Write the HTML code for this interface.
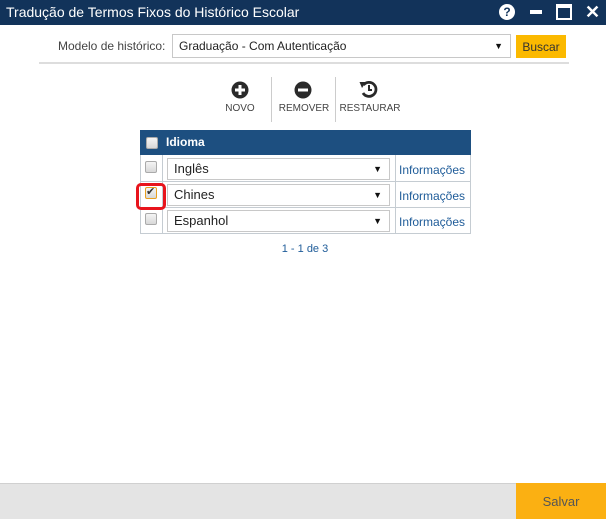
<!DOCTYPE html>
<html><head><meta charset="utf-8"><style>
*{margin:0;padding:0;box-sizing:border-box}
body{width:606px;height:519px;background:#fff;font-family:"Liberation Sans",sans-serif;position:relative;overflow:hidden;color:#333}
.abs{position:absolute}
.title{left:0;top:0;width:606px;height:25px;background:#12335a;color:#fff;font-size:14px;line-height:25px;padding-left:6px}
.sel{border:1px solid #c8c8c8;background:#fff;font-size:12px;color:#222;padding-left:6px}
.arr{position:absolute;right:7px;font-size:9px;color:#111}
.lbl{font-size:10px;color:#444;text-align:center}
.cb{position:absolute;width:12px;height:12px;border:1px solid #aaa;border-radius:2px;background:linear-gradient(#f4f4f4,#d8d8d8)}
.link{font-size:12px;color:#1f5c99}
</style></head><body>
<div class="abs title">Tradução de Termos Fixos do Histórico Escolar</div>
<div class="abs" style="left:499px;top:4px;width:16px;height:16px;border-radius:50%;background:#fff;color:#12335a;font-weight:bold;font-size:12px;text-align:center;line-height:16px">?</div>
<div class="abs" style="left:530px;top:10px;width:12px;height:4px;background:#fff"></div>
<div class="abs" style="left:556px;top:4px;width:16px;height:16px;border:2px solid #fff;border-top-width:4px"></div>
<div class="abs" style="left:585px;top:1px;color:#fff;font-size:18px;font-weight:bold;line-height:22px">✕</div>

<div class="abs" style="left:58px;top:39px;font-size:12px;color:#444">Modelo de histórico:</div>
<div class="abs sel" style="left:172px;top:34px;width:339px;height:24px;line-height:22px">Graduação - Com Autenticação<span class="arr">▼</span></div>
<div class="abs" style="left:516px;top:35px;width:50px;height:23px;background:#fbb900;font-size:12px;color:#333;text-align:center;line-height:25px">Buscar</div>
<div class="abs" style="left:39px;top:62px;width:530px;height:2px;background:#ddd"></div>

<svg class="abs" style="left:230px;top:80px" width="20" height="20" viewBox="0 0 20 20"><circle cx="10" cy="10" r="8.5" fill="#2a2a2a"/><rect x="5" y="8.5" width="10" height="3" fill="#fff"/><rect x="8.5" y="5" width="3" height="10" fill="#fff"/></svg>
<svg class="abs" style="left:293px;top:80px" width="20" height="20" viewBox="0 0 20 20"><circle cx="10" cy="10" r="8.5" fill="#2a2a2a"/><rect x="5" y="8.5" width="10" height="3" fill="#fff"/></svg>
<svg class="abs" style="left:358px;top:79px" width="22" height="20" viewBox="0 0 22 20"><path d="M5.5 6 A7 7 0 1 1 5 14" fill="none" stroke="#2a2a2a" stroke-width="2.8"/><path d="M1.5 3 L8 3 L4 9 Z" fill="#2a2a2a"/><path d="M11 6 V11 H14" fill="none" stroke="#2a2a2a" stroke-width="2"/></svg>
<div class="abs lbl" style="left:220px;top:103px;width:40px">NOVO</div>
<div class="abs lbl" style="left:276px;top:103px;width:56px">REMOVER</div>
<div class="abs lbl" style="left:339px;top:103px;width:62px">RESTAURAR</div>
<div class="abs" style="left:271px;top:77px;width:1px;height:45px;background:#ccc"></div>
<div class="abs" style="left:335px;top:77px;width:1px;height:45px;background:#ccc"></div>

<div class="abs" style="left:140px;top:130px;width:331px;height:25px;background:#1d4f80"></div>
<div class="cb" style="left:146px;top:137px"></div>
<div class="abs" style="left:166px;top:130px;line-height:25px;color:#fff;font-size:12px;font-weight:bold">Idioma</div>
<div class="abs" style="left:140px;top:155px;width:331px;height:79px;border:1px solid #c5ccd2;border-top:none"></div>
<div class="abs" style="left:141px;top:181px;width:329px;height:1px;background:#c5ccd2"></div>
<div class="abs" style="left:141px;top:207px;width:329px;height:1px;background:#c5ccd2"></div>
<div class="abs" style="left:162px;top:155px;width:1px;height:78px;background:#c5ccd2"></div>
<div class="abs" style="left:395px;top:155px;width:1px;height:78px;background:#c5ccd2"></div>

<div class="cb" style="left:145px;top:161px"></div>
<div class="abs sel" style="left:167px;top:158px;width:223px;height:22px;line-height:20px;font-size:13px">Inglês<span class="arr">▼</span></div>
<div class="abs link" style="left:399px;top:163px">Informações</div>

<div class="abs" style="left:136px;top:183px;width:30px;height:27px;border:3px solid #e8141c;border-radius:5px"></div>
<div class="cb" style="left:145px;top:187px;border-color:#e8a020"><span style="position:absolute;left:0;top:-3px;font-size:11px;color:#333">✔</span></div>
<div class="abs sel" style="left:167px;top:184px;width:223px;height:22px;line-height:20px;font-size:13px">Chines<span class="arr">▼</span></div>
<div class="abs link" style="left:399px;top:189px">Informações</div>

<div class="cb" style="left:145px;top:213px"></div>
<div class="abs sel" style="left:167px;top:210px;width:223px;height:22px;line-height:20px;font-size:13px">Espanhol<span class="arr">▼</span></div>
<div class="abs link" style="left:399px;top:215px">Informações</div>

<div class="abs" style="left:250px;top:243px;width:110px;text-align:center;font-size:11px;color:#1f5c99">1 - 1 de 3</div>

<div class="abs" style="left:0;top:483px;width:606px;height:36px;background:#e4e4e4;border-top:1px solid #d0d0d0"></div>
<div class="abs" style="left:516px;top:483px;width:90px;height:36px;background:#fbb012;color:#555;font-size:13px;text-align:center;line-height:38px">Salvar</div>
</body></html>
